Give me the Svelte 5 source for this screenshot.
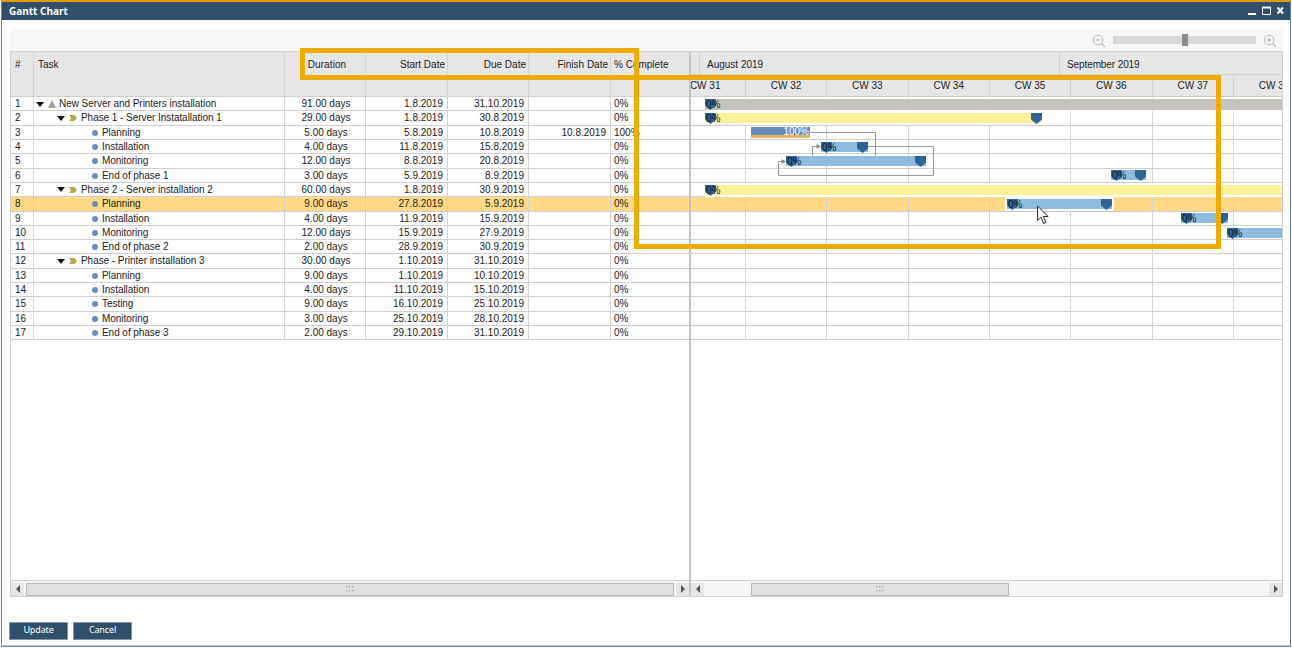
<script lang="ts">
	interface Task {
		name: string;
		level: number;
		duration: string;
		start: string;
		due: string;
		finish?: string;
		complete?: string;
		selected?: boolean;
		bar?: Bar;
	}

	interface Bar {
		kind: 'project' | 'phase' | 'task' | 'done';
		x: number;
		width: number;
		label: string;
	}

	const ROW_HEIGHT = 14.32;

	const tasks: Task[] = [
		{ name: 'New Server and Printers installation', level: 0, duration: '91.00', start: '1.8.2019', due: '31.10.2019', bar: { kind: 'project', x: 14, width: 900, label: '0%' } },
		{ name: 'Phase 1 - Server Instatallation 1', level: 1, duration: '29.00', start: '1.8.2019', due: '30.8.2019', bar: { kind: 'phase', x: 14, width: 337, label: '0%' } },
		{ name: 'Planning', level: 2, duration: '5.00', start: '5.8.2019', due: '10.8.2019', finish: '10.8.2019', complete: '100%', bar: { kind: 'done', x: 60, width: 59, label: '100%' } },
		{ name: 'Installation', level: 2, duration: '4.00', start: '11.8.2019', due: '15.8.2019', bar: { kind: 'task', x: 130, width: 47, label: '0%' } },
		{ name: 'Monitoring', level: 2, duration: '12.00', start: '8.8.2019', due: '20.8.2019', bar: { kind: 'task', x: 95, width: 140, label: '0%' } },
		{ name: 'End of phase 1', level: 2, duration: '3.00', start: '5.9.2019', due: '8.9.2019', bar: { kind: 'task', x: 420, width: 35, label: '0%' } },
		{ name: 'Phase 2 - Server installation 2', level: 1, duration: '60.00', start: '1.8.2019', due: '30.9.2019', bar: { kind: 'phase', x: 14, width: 700, label: '0%' } },
		{ name: 'Planning', level: 2, duration: '9.00', start: '27.8.2019', due: '5.9.2019', selected: true, bar: { kind: 'task', x: 316, width: 105, label: '0%' } },
		{ name: 'Installation', level: 2, duration: '4.00', start: '11.9.2019', due: '15.9.2019', bar: { kind: 'task', x: 490, width: 47, label: '0%' } },
		{ name: 'Monitoring', level: 2, duration: '12.00', start: '15.9.2019', due: '27.9.2019', bar: { kind: 'task', x: 536, width: 140, label: '0%' } },
		{ name: 'End of phase 2', level: 2, duration: '2.00', start: '28.9.2019', due: '30.9.2019' },
		{ name: 'Phase - Printer installation 3', level: 1, duration: '30.00', start: '1.10.2019', due: '31.10.2019' },
		{ name: 'Planning', level: 2, duration: '9.00', start: '1.10.2019', due: '10.10.2019' },
		{ name: 'Installation', level: 2, duration: '4.00', start: '11.10.2019', due: '15.10.2019' },
		{ name: 'Testing', level: 2, duration: '9.00', start: '16.10.2019', due: '25.10.2019' },
		{ name: 'Monitoring', level: 2, duration: '3.00', start: '25.10.2019', due: '28.10.2019' },
		{ name: 'End of phase 3', level: 2, duration: '2.00', start: '29.10.2019', due: '31.10.2019' }
	];

	const weeks = [31, 32, 33, 34, 35, 36, 37, 38];
</script>

{#snippet marker()}
	<svg class="marker" width="11" height="11" viewBox="0 0 11 11">
		<path d="M0 0H11V6.5L5.5 11L0 6.5Z" fill="#2f6497" />
	</svg>
{/snippet}

{#snippet arrow(direction: string)}
	<span class="arrow">
		<svg width="4" height="8" viewBox="0 0 4 8">
			<path d={direction === 'left' ? 'M4 0V8L0 4Z' : 'M0 0V8L4 4Z'} fill="#555" />
		</svg>
	</span>
{/snippet}

{#snippet grip()}
	<svg width="8" height="6" viewBox="0 0 8 6" fill="#aaa">
		{#each [0, 3, 6] as x}
			<rect {x} y="0" width="1.4" height="1.4" />
			<rect {x} y="4" width="1.4" height="1.4" />
		{/each}
	</svg>
{/snippet}

<div class="screen">
	<div class="window">
		<header class="titlebar">
			<span class="title">Gantt Chart</span>
			<svg width="34" height="10" viewBox="0 0 34 10" fill="none" stroke="#fff">
				<path d="M-2 8H6" stroke-width="2" />
				<path d="M12.5 1.5H20.5V8.5H12.5Z" stroke-width="1" />
				<path d="M12 1.5H21" stroke-width="2" />
				<path d="M27.5 1.5L33 7.5M33 1.5L27.5 7.5" stroke-width="2" />
			</svg>
		</header>

		<main>
			<div class="toolbar">
				<svg class="zoom-icon" width="14" height="14" viewBox="0 0 14 14" fill="none" stroke="#b5b5b5">
					<circle cx="6" cy="6" r="4.8" />
					<path d="M9.5 9.5L13 13" stroke-width="1.3" />
					<path d="M3.8 6H8.2" />
				</svg>
				<div class="slider"><div class="thumb"></div></div>
				<svg class="zoom-icon" width="14" height="14" viewBox="0 0 14 14" fill="none" stroke="#b5b5b5">
					<circle cx="6" cy="6" r="4.8" />
					<path d="M9.5 9.5L13 13" stroke-width="1.3" />
					<path d="M3.8 6H8.2M6 3.8V8.2" />
				</svg>
			</div>

			<div class="panes">
				<section class="table">
					<div class="row head">
						<span>#</span>
						<span>Task</span>
						<span class="center">Duration</span>
						<span class="right">Start Date</span>
						<span class="right">Due Date</span>
						<span class="right">Finish Date</span>
						<span>% Complete</span>
					</div>
					{#each tasks as task, i}
						<div class="row" class:selected={task.selected} style="height: {ROW_HEIGHT}px">
							<span>{i + 1}</span>
							<span class="name level-{task.level}">
								{#if task.level < 2}
									<svg class="caret" width="8" height="5" viewBox="0 0 8 5"><path d="M0 0H8L4 5Z" fill="#111" /></svg>
								{/if}
								{#if task.level === 0}
									<svg width="8" height="8" viewBox="0 0 8 8"><path d="M4 0L8 8H0Z" fill="#a5a29b" /></svg>
								{:else if task.level === 1}
									<svg width="8" height="6" viewBox="0 0 8 6"><path d="M0 0H5.5L8 3L5.5 6H0L2 3Z" fill="#b9a951" /></svg>
								{:else}
									<svg width="6" height="6" viewBox="0 0 6 6"><circle cx="3" cy="3" r="3" fill="#688eb8" /></svg>
								{/if}
								<span class="label">{task.name}</span>
							</span>
							<span class="center">{task.duration} days</span>
							<span class="right">{task.start}</span>
							<span class="right">{task.due}</span>
							<span class="right">{task.finish ?? ''}</span>
							<span>{task.complete ?? '0%'}</span>
						</div>
					{/each}
					<div class="filler"></div>
					<div class="scrollbar">
						{@render arrow('left')}
						<span class="scroll-thumb wide">{@render grip()}</span>
						{@render arrow('right')}
					</div>
				</section>

				<section class="chart">
					<div class="months">
						<span class="july"></span>
						<span class="august">August 2019</span>
						<span class="september">September 2019</span>
					</div>
					<div class="weeks">
						{#each weeks as week}
							<span>CW {week}</span>
						{/each}
					</div>
					<div class="canvas">
						{#each tasks as task}
							<div class="line" class:selected={task.selected} style="height: {ROW_HEIGHT}px">
								{#each weeks as _}
									<span></span>
								{/each}
							</div>
						{/each}
						<svg class="links" width="591" height="244" viewBox="0 0 591 244" fill="none" stroke="#9b9b9b">
							<path d="M119 35.5H184.5V60" />
							<path d="M121.5 60V49.5H126" />
							<path d="M177 49.5H242.5V78.5H87.5V64.5H91" />
							<path d="M125.5 47L130 49.5L125.5 52Z" fill="#8b8b8b" stroke="none" />
							<path d="M90.5 62L95 64.5L90.5 67Z" fill="#8b8b8b" stroke="none" />
						</svg>
						{#each tasks as task, i}
							{#if task.bar}
								<div
									class="bar {task.bar.kind}"
									class:active={task.selected}
									style="left: {task.bar.x}px; top: {Math.round(i * ROW_HEIGHT + 1.8)}px; width: {task.bar.width}px"
								>
									{#if task.bar.kind !== 'done'}
										{@render marker()}
										{@render marker()}
									{/if}
									<span class="percent">{task.bar.label}</span>
								</div>
							{/if}
						{/each}
					</div>
					<div class="filler"></div>
					<div class="scrollbar">
						{@render arrow('left')}
						<span class="scroll-thumb short">{@render grip()}</span>
						<span class="spacer"></span>
						{@render arrow('right')}
					</div>
				</section>
			</div>

			<footer>
				<button>Update</button>
				<button>Cancel</button>
			</footer>
		</main>
	</div>

	<div class="highlight columns"></div>
	<div class="highlight timeline"></div>
	<svg class="cursor" width="12" height="20" viewBox="0 0 12 20">
		<path d="M0.6 1V15.5L4 12.3L6.6 18.5L9 17.5L6.4 11.5H11Z" fill="#fff" stroke="#222" stroke-width="1" />
	</svg>
</div>

<style>
	:global(body) {
		margin: 0;
		background: #fff;
	}

	.screen {
		position: relative;
		box-sizing: border-box;
		width: 1292px;
		height: 648px;
		padding: 0 1px 1px 1px;
		overflow: hidden;
		font-family: 'Liberation Sans', Arial, sans-serif;
		font-size: 10px;
		color: #1c1c1c;
	}

	.window {
		display: flex;
		flex-direction: column;
		box-sizing: border-box;
		height: 647px;
		border: 1px solid #6886a3;
		border-top: 2px solid #e79b05;
		box-shadow: inset 0 -1px #c5d0da;
	}

	.titlebar {
		display: flex;
		flex: none;
		align-items: center;
		justify-content: space-between;
		box-sizing: border-box;
		height: 18px;
		padding: 0 6px 0 7px;
		background: #304f6b;
	}

	.titlebar svg {
		overflow: visible;
	}

	.title {
		font-family: 'Noto Sans', sans-serif;
		font-size: 10px;
		font-weight: 700;
		color: #fff;
	}

	main {
		display: flex;
		flex: 1;
		flex-direction: column;
		padding: 9px 7px 7px 8px;
	}

	.toolbar {
		display: flex;
		align-items: center;
		justify-content: flex-end;
		gap: 7px;
		height: 22px;
		padding-right: 6px;
		background: #f7f7f7;
	}

	.zoom-icon {
		margin-top: 2px;
	}

	.slider {
		display: flex;
		align-items: center;
		width: 143px;
		height: 8px;
		background: #d9d9d9;
	}

	.thumb {
		width: 6px;
		height: 12px;
		margin-left: 69px;
		background: #8e8e8e;
	}

	.panes {
		display: flex;
		box-sizing: border-box;
		width: 1273px;
		height: 546px;
		border: 1px solid #cfcfcf;
	}

	.table,
	.chart {
		display: flex;
		flex-direction: column;
		min-width: 0;
	}

	.table {
		flex: none;
		box-sizing: border-box;
		width: 680px;
		border-right: 2px solid #c4c4c4;
	}

	.chart {
		flex: 1;
		overflow: hidden;
	}

	.row {
		display: grid;
		grid-template-columns: 23px 251px 81px 82px 81px 82px 1fr;
		flex: none;
		box-sizing: border-box;
		border-bottom: 1px solid #cfcfcf;
		line-height: 14px;
		white-space: nowrap;
	}

	.row > span {
		padding: 0 4px;
		border-right: 1px solid #d3d3d3;
	}

	.row > span:last-child {
		padding: 0 3px;
		border-right: 0;
	}

	.row .right {
		text-align: right;
		padding-right: 4px;
	}

	.row .center {
		padding-left: 6px;
		text-align: center;
	}

	.row.head {
		height: 45px;
		background: #e6e6e6;
		line-height: 25px;
	}

	.head .center {
		padding-left: 8px;
		letter-spacing: 0.1px;
	}

	.head .right {
		padding-right: 2px;
	}

	.selected {
		background: #ffd985;
	}

	.row .name {
		display: flex;
		align-items: center;
		gap: 4px;
	}

	.row .name.level-0 {
		padding-left: 2px;
		gap: 3.5px;
	}

	.row .name.level-1 {
		padding-left: 23px;
	}

	.row .name.level-2 {
		padding-left: 57.5px;
		gap: 4.5px;
	}

	.label {
		letter-spacing: -0.05px;
	}

	.filler {
		flex: 1;
		background: #fff;
	}

	.months,
	.weeks,
	.line {
		display: flex;
		flex: none;
		box-sizing: border-box;
		border-bottom: 1px solid #cfcfcf;
	}

	.months,
	.weeks {
		background: #e6e6e6;
		white-space: nowrap;
	}

	.months {
		height: 23px;
		line-height: 25px;
	}

	.months span {
		box-sizing: border-box;
		padding-left: 7px;
		border-right: 1px solid #cfcfcf;
	}

	.months .july {
		width: 9px;
	}

	.months .august {
		width: 360px;
	}

	.months .september {
		border-right: 0;
		letter-spacing: -0.1px;
	}

	.weeks {
		height: 22px;
		line-height: 22px;
		text-align: center;
	}

	.weeks span,
	.line span {
		flex: none;
		box-sizing: border-box;
		width: 81.35px;
		border-right: 1px solid #d3d3d3;
	}

	.weeks span:first-child,
	.line span:first-child {
		margin-left: -26.5px;
	}

	.weeks span:first-child {
		padding-left: 1px;
	}

	.canvas {
		position: relative;
		flex: none;
	}

	.links {
		position: absolute;
		left: 0;
		top: 0;
	}

	.bar {
		position: absolute;
		display: flex;
		justify-content: space-between;
		height: 10px;
		background: #8dbcdf;
		color: #0d1a26;
	}

	.bar.project {
		height: 11px;
		background: #c6c2bd;
		box-shadow: 0 -1px #fff, 0 1px #fff;
	}

	.bar.phase {
		background: #fdf19a;
		box-shadow: 0 -2px #fff, 0 2px #fff;
	}

	.bar.done {
		box-sizing: border-box;
		height: 11px;
		background: #688eb8;
		border-bottom: 3px solid #e9b264;
		color: #fff;
	}

	.bar.active {
		box-shadow: 0 0 0 2px #fff;
	}

	.marker {
		flex: none;
	}

	.percent {
		position: absolute;
		left: 1px;
		top: 0;
		line-height: 11px;
	}

	.done .percent {
		left: auto;
		right: 1px;
		line-height: 10px;
	}

	.scrollbar {
		display: flex;
		align-items: center;
		gap: 2px;
		box-sizing: border-box;
		height: 16px;
		padding: 1px 0 0;
		background: #f6f6f6;
		border-top: 1px solid #cfcfcf;
	}

	.arrow {
		display: flex;
		align-items: center;
		justify-content: center;
		width: 13px;
		height: 13px;
		background: #e6e6e6;
	}

	.scroll-thumb {
		display: flex;
		align-items: center;
		justify-content: center;
		box-sizing: border-box;
		height: 13px;
		background: #e1e1e1;
		border: 1px solid #b9b9b9;
	}

	.scroll-thumb.wide {
		flex: 1;
	}

	.scroll-thumb.short {
		width: 258px;
		margin-left: 45px;
	}

	.spacer {
		flex: 1;
	}

	footer {
		display: flex;
		gap: 5px;
		margin: 25px 0 0 -1px;
	}

	button {
		width: 59px;
		height: 18px;
		padding: 0 0 2px;
		background: #304f6b;
		border: 1px solid #8296a8;
		font-family: 'Noto Sans', sans-serif;
		font-size: 9px;
		letter-spacing: -0.15px;
		line-height: 14px;
		color: #fff;
	}

	.highlight {
		position: absolute;
		box-sizing: border-box;
		border: 5px solid #f0ab00;
	}

	.highlight.columns {
		left: 300px;
		top: 48px;
		width: 339px;
		height: 32px;
	}

	.highlight.timeline {
		left: 634px;
		top: 75px;
		width: 587px;
		height: 174px;
	}

	.cursor {
		position: absolute;
		left: 1037px;
		top: 205px;
	}
</style>
